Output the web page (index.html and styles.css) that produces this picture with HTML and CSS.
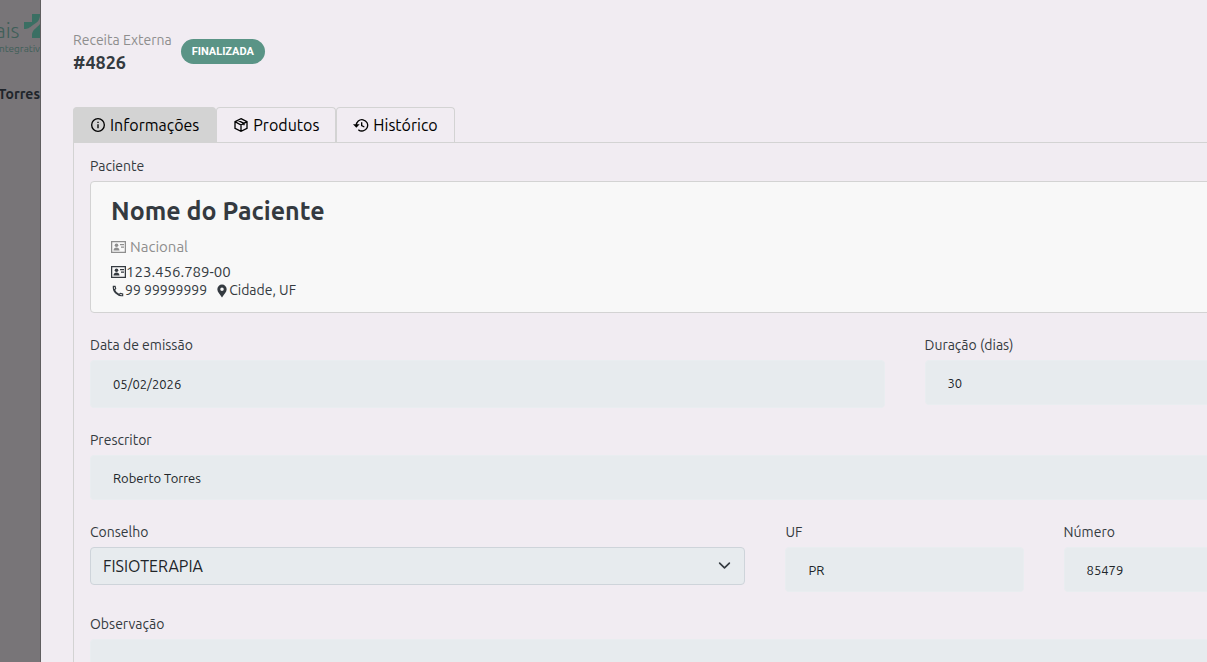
FILE: index.html
```html
<!DOCTYPE html>
<html lang="pt-BR">
<head>
    <meta charset="UTF-8">
    <meta name="viewport" content="width=device-width, initial-scale=1.0">
    <title>Receita Externa #4826</title>
    <link rel="stylesheet" href="styles.css">
</head>
<body>
    <aside class="sidebar">
        <div class="logo">
            <span class="logo-name">ais</span>
            <svg class="logo-mark" viewBox="0 0 26 24" aria-hidden="true">
                <path d="M8 0h8v2C15 8 12 9 9 11c-4 3-5 4-9 4V8h8z"/>
                <path d="M18 3v5h7v8h-7v8H8v-4c1-4 3-5 5-7 4-3 5-6 5-10z"/>
            </svg>
        </div>
        <span class="logo-sub">ntegrativ</span>
        <strong class="user-name">Torres</strong>
    </aside>

    <main class="drawer">
        <header class="drawer-header">
            <div>
                <p class="header-label">Receita Externa</p>
                <h1>#4826</h1>
            </div>
            <span class="badge">FINALIZADA</span>
        </header>

        <div class="tabs" role="tablist">
            <button class="tab active" type="button" role="tab" aria-selected="true">
                <svg class="icon" viewBox="0 0 24 24" aria-hidden="true"><circle cx="12" cy="12" r="9.500"/><path d="M12 11v6M12 7v2"/></svg>
                Informações
            </button>
            <button class="tab" type="button" role="tab" aria-selected="false">
                <svg class="icon" viewBox="0 0 24 24" aria-hidden="true"><path d="M12 2.500l9 4.500v10l-9 4.500L3 17V7zM3 7l9 5 9-5M12 12v9M7.500 5l9 4.500v3"/></svg>
                Produtos
            </button>
            <button class="tab" type="button" role="tab" aria-selected="false">
                <svg class="icon" viewBox="0 0 24 24" aria-hidden="true"><path d="M5 13a8.500 8.500 0 1 1 3 6M13 8v5l4 2"/><path class="solid" d="M0 11h10l-5 5z"/></svg>
                Histórico
            </button>
        </div>

        <form class="panel">
            <div class="row">
                <div class="field col-12">
                    <span class="label">Paciente</span>
                    <section class="patient-card">
                        <h2>Nome do Paciente</h2>
                        <p class="nationality">
                            <svg class="icon id-card" viewBox="0 0 15 12" aria-hidden="true"><path d="M.6.6h13.800v10.800H.6z"/><path class="solid" d="M2.500 9.500c0-4 6-4 6 0zM9 3h4v1.300H9zM10 5.500h3v1.300h-3z"/><circle class="solid" cx="5.500" cy="4.300" r="1.800"/></svg>
                            Nacional
                        </p>
                        <p class="info-line document">
                            <svg class="icon id-card" viewBox="0 0 15 12" aria-hidden="true"><path d="M.6.6h13.800v10.800H.6z"/><path class="solid" d="M2.500 9.500c0-4 6-4 6 0zM9 3h4v1.300H9zM10 5.500h3v1.300h-3z"/><circle class="solid" cx="5.500" cy="4.300" r="1.800"/></svg>
                            <span>123.456.789-00</span>
                        </p>
                        <p class="info-line">
                            <svg class="icon phone" viewBox="0 0 24 24" aria-hidden="true"><path d="M4 4h3l1 4-2 2c1 3 4 6 8 8l2-2 4 1v3C11 21 3 13 4 4z"/></svg>
                            <span>99 99999999</span>
                            <svg class="icon pin" viewBox="0 0 24 24" aria-hidden="true"><path class="solid" fill-rule="evenodd" d="M12 1a8 8 0 0 0-8 8c0 5 4 8 8 14 4-6 8-9 8-14a8 8 0 0 0-8-8zm0 5a3 3 0 1 1 0 6 3 3 0 0 1 0-6z"/></svg>
                            <span>Cidade, UF</span>
                        </p>
                    </section>
                </div>
            </div>

            <div class="row">
                <div class="field col-6">
                    <label for="dataEmissao">Data de emissão</label>
                    <input type="text" id="dataEmissao" class="date" value="05/02/2026" disabled>
                </div>
                <div class="field col-6">
                    <label for="duracao">Duração (dias)</label>
                    <input type="text" id="duracao" value="30" disabled>
                </div>
            </div>

            <div class="row">
                <div class="field col-12">
                    <label for="prescritor">Prescritor</label>
                    <input type="text" id="prescritor" value="Roberto Torres" disabled>
                </div>
            </div>

            <div class="row">
                <div class="field col-5">
                    <label for="conselho">Conselho</label>
                    <div class="select-box">
                        <select id="conselho" disabled>
                            <option>FISIOTERAPIA</option>
                        </select>
                        <svg class="chevron" viewBox="0 0 16 16" aria-hidden="true"><path d="M2 5l6 6 6-6"/></svg>
                    </div>
                </div>
                <div class="field col-2">
                    <label for="uf">UF</label>
                    <input type="text" id="uf" value="PR" disabled>
                </div>
                <div class="field col-5">
                    <label for="numero">Número</label>
                    <input type="text" id="numero" value="85479" disabled>
                </div>
            </div>

            <div class="row">
                <div class="field col-12">
                    <label for="observacao">Observação</label>
                    <textarea id="observacao" rows="4" disabled></textarea>
                </div>
            </div>
        </form>
    </main>
</body>
</html>
```
FILE: styles.css
```css
:root {
    --page-bg: #f1ecf2;
    --field-bg: #e7ebee;
    --border-color: #d3d3d3;
    --text-color: #343a40;
    --muted-color: #8e8e8e;
    --primary-color: #5a9486;
}

* {
    box-sizing: border-box;
}

body {
    margin: 0;
    display: flex;
    height: 100vh;
    overflow: hidden;
    font-family: "Ubuntu", "Noto Sans", sans-serif;
    font-size: 14px;
    line-height: 21px;
    color: var(--text-color);
    background-color: #787578;
}

h1, h2, p {
    margin: 0;
}

/* page behind the drawer */
.sidebar {
    flex: none;
    width: 40px;
    padding-top: 14px;
    display: flex;
    flex-direction: column;
    align-items: flex-end;
    overflow: hidden;
    color: #3f5f59;
}

.logo {
    display: flex;
    align-self: flex-start;
    gap: 4px;
    height: 24px;
    margin-left: -5px;
}

.logo-name {
    font-size: 21px;
    font-weight: 300;
    line-height: 32px;
}

.logo-mark {
    flex: none;
    width: 26px;
    height: 24px;
    fill: #3a6f63;
}

.logo-sub {
    font-size: 10px;
    margin-bottom: 25px;
}

.user-name {
    color: #20252b;
}

.drawer {
    flex: none;
    width: calc(143vw + 2px);
    min-height: 100vh;
    padding: 30px 32px;
    border-left: 1px solid #605e60;
    background-color: var(--page-bg);
}

.drawer-header {
    display: flex;
    align-items: center;
    gap: 9px;
    margin-bottom: 34px;
}

.header-label {
    color: var(--muted-color);
}

h1 {
    font-size: 18px;
    font-weight: 600;
    line-height: 22px;
}

.badge {
    padding: 2px 11px;
    border-radius: 13px;
    background-color: var(--primary-color);
    color: #fff;
    font-family: "Roboto", sans-serif;
    font-size: 11px;
    font-weight: 700;
}

.icon {
    flex: none;
    width: 16px;
    height: 16px;
    fill: none;
    stroke: currentColor;
    stroke-width: 2;
}

.solid {
    fill: currentColor;
    stroke: none;
}

.tabs {
    display: flex;
}

.tab {
    display: flex;
    align-items: center;
    gap: 4px;
    height: 35px;
    padding: 0 16px;
    border: 1px solid var(--border-color);
    border-bottom: none;
    border-radius: 4px 4px 0 0;
    background-color: transparent;
    color: #000;
    font-family: inherit;
    font-size: 16px;
}

.tab.active {
    background-color: var(--border-color);
}

.panel {
    display: flex;
    flex-direction: column;
    gap: 22px;
    padding: 13px 16px;
    border: 1px solid var(--border-color);
}

.row {
    display: grid;
    grid-template-columns: repeat(12, 1fr);
    column-gap: 40px;
    align-items: start;
}

.col-2 {
    grid-column: span 2;
}

.col-5 {
    grid-column: span 5;
}

.col-6 {
    grid-column: span 6;
}

.col-12 {
    grid-column: span 12;
}

.field {
    display: flex;
    flex-direction: column;
    gap: 4px;
}

.patient-card {
    padding: 12px 20px;
    border: 1px solid var(--border-color);
    border-radius: 4px;
    background-color: #f8f8f8;
}

h2 {
    margin-bottom: 6px;
    font-size: 25px;
    font-weight: 600;
    line-height: 35px;
}

.nationality {
    display: flex;
    align-items: center;
    gap: 4px;
    margin-bottom: 3px;
    font-size: 15px;
    line-height: 24px;
    color: var(--muted-color);
}

.info-line {
    display: flex;
    align-items: center;
    line-height: 19px;
}

.document {
    font-size: 15px;
}

.id-card {
    width: 15px;
    height: 12px;
    stroke-width: 1.3;
}

.phone,
.pin {
    width: 14px;
    height: 14px;
}

.pin {
    margin-left: 8px;
}

input,
textarea,
select {
    width: 100%;
    border: 1px solid #e9edf0;
    border-radius: 4px;
    background-color: var(--field-bg);
    color: #212529;
    font-family: inherit;
    font-size: 13px;
    opacity: 1;
}

input {
    height: 45px;
    padding: 0 22px;
}

.date {
    height: 48px;
}

textarea {
    padding: 12px 22px;
    resize: none;
}

.select-box {
    position: relative;
}

select {
    display: block;
    height: 38px;
    padding: 0 12px;
    border-color: #ced4da;
    font-size: 16px;
    appearance: none;
}

.chevron {
    position: absolute;
    top: 12px;
    right: 14px;
    width: 13px;
    height: 13px;
    fill: none;
    stroke: #343a40;
    stroke-width: 2;
    stroke-linecap: round;
    stroke-linejoin: round;
}
```
